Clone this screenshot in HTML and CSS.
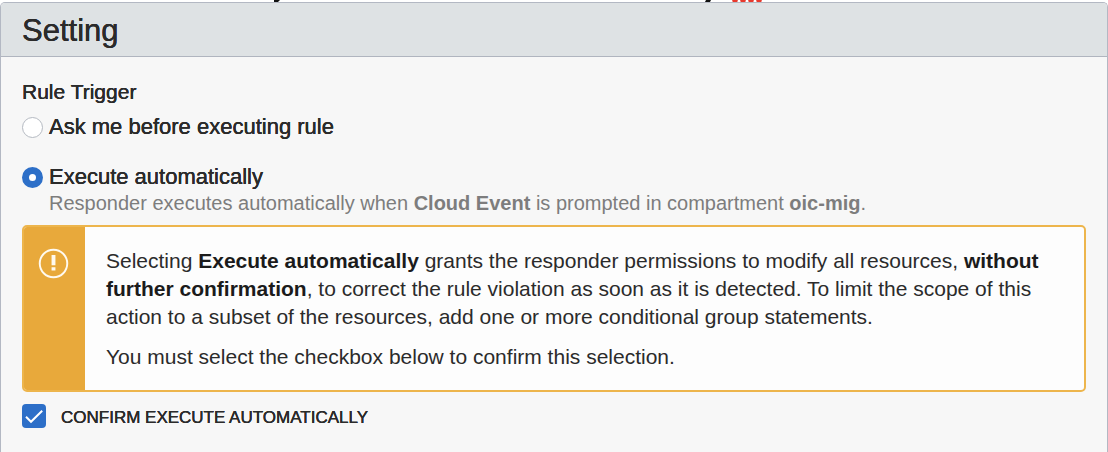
FILE: index.html
```html
<!DOCTYPE html>
<html lang="en">
<head>
<meta charset="utf-8">
<title>Setting</title>
<link rel="stylesheet" href="styles.css">
</head>
<body>
<div class="preceding" aria-hidden="true">
  <svg class="preceding-marks" width="1108" height="2" viewBox="0 0 1108 2">
    <path d="M274 0h6l-2 2h-4zM706 0h5l-1 2h-5z" fill="#111"/>
    <g fill="#e8392d"><circle cx="735" cy="0" r="2.8"/><circle cx="743" cy="0" r="2.8"/><circle cx="751" cy="0" r="2.8"/><circle cx="759" cy="0" r="2.8"/></g>
  </svg>
</div>
<section class="panel">
  <header class="panel-header"><h1 class="panel-title">Setting</h1></header>
  <form class="panel-body">
    <fieldset class="trigger">
      <legend class="trigger-title">Rule Trigger</legend>
      <div class="option">
        <input class="radio" type="radio" name="trigger" id="ask">
        <label class="option-label" for="ask">Ask me before executing rule</label>
      </div>
      <div class="option option-auto">
        <input class="radio" type="radio" name="trigger" id="auto" checked>
        <label class="option-label" for="auto">Execute automatically</label>
      </div>
      <p class="hint">Responder executes automatically when <strong>Cloud Event</strong> is prompted in compartment <strong>oic-mig</strong>.</p>
    </fieldset>
    <div class="notice">
      <div class="notice-side">
        <svg class="notice-icon" width="31" height="31" viewBox="0 0 32 32" fill="none" stroke="#fffaf0" aria-hidden="true">
          <circle cx="16" cy="16" r="14.2" stroke-width="2"/>
          <path d="M16 7.2v10.6M16 19.8v3.4" stroke-width="4"/>
        </svg>
      </div>
      <div class="notice-text">
        <p class="notice-line">Selecting <strong>Execute automatically</strong> grants the responder permissions to modify all resources, <strong>without further confirmation</strong>, to correct the rule violation as soon as it is detected. To limit the scope of this action to a subset of the resources, add one or more conditional group statements.</p>
        <p class="notice-line">You must select the checkbox below to confirm this selection.</p>
      </div>
    </div>
    <div class="confirm">
      <span class="check">
        <input class="check-input" type="checkbox" id="confirm" checked>
        <svg class="check-mark" width="24" height="24" viewBox="0 0 24 24" fill="none" stroke="#fff" stroke-width="2" aria-hidden="true"><path d="M4 12.8l5 5L20.2 6.8"/></svg>
      </span>
      <label class="confirm-label" for="confirm">CONFIRM EXECUTE AUTOMATICALLY</label>
    </div>
  </form>
</section>
</body>
</html>
```
FILE: styles.css
```css
* { box-sizing: border-box; }
body {
  margin: 0;
  min-height: 100vh;
  display: flex;
  flex-direction: column;
  background: #fff;
  color: #2b2b2b;
  font: 21px/28px "Liberation Sans", Arial, sans-serif;
}
.preceding { height: 2px; overflow: hidden; }
.preceding-marks { display: block; }
.panel {
  flex: 1;
  border: 1px solid #b3b8c3;
  border-bottom: 0;
  border-radius: 5px 5px 0 0;
  background: #f7f7f7;
  overflow: hidden;
}
.panel-header {
  padding: 12px 21px 9px;
  background: #dee2e4;
  border-bottom: 1px solid #b0b5bf;
}
.panel-title {
  margin: 0;
  font-size: 31px;
  font-weight: 400;
  line-height: 32px;
}
.panel-title,
.trigger-title,
.option-label,
.confirm-label { text-shadow: 0 0 currentColor, 0 0 currentColor; }
.panel-body { padding: 21px; }
.trigger { margin: 0; padding: 0; border: 0; min-width: 0; }
.trigger-title { padding: 0; }
.option { display: flex; align-items: center; gap: 6px; margin-top: 7px; }
.option-auto { margin-top: 22px; }
.option-label { font-size: 22px; }
.radio {
  appearance: none;
  flex: none;
  width: 21px;
  height: 21px;
  margin: 0;
  border: 1px solid #b5bac2;
  border-radius: 50%;
  background: #fff;
}
.radio:checked { border: 7px solid #2d6fc8; }
.hint { margin: 0 0 0 27px; font-size: 20px; line-height: 24px; color: #7d7d7d; }
.notice {
  display: flex;
  margin-top: 10px;
  border: 2px solid #edb54c;
  border-radius: 5px;
  background: #fdfdfd;
  overflow: hidden;
}
.notice-side { flex: none; width: 61px; padding: 21px 0 0 14px; background: #e8a93b; }
.notice-icon { display: block; }
.notice-text { flex: 1; padding: 20px 32px 19px 21px; }
.notice-line { margin: 0; }
.notice-line + .notice-line { margin-top: 12px; }
strong { font-weight: 700; }
.notice strong { color: #1b1b1b; }
.confirm { display: flex; align-items: flex-start; gap: 15px; margin-top: 12px; }
.check { display: grid; flex: none; }
.check-input {
  grid-area: 1 / 1;
  appearance: none;
  width: 24px;
  height: 24px;
  margin: 0;
  border-radius: 4px;
  background: #2d6fc8;
}
.check-mark { grid-area: 1 / 1; pointer-events: none; visibility: hidden; }
.check-input:checked + .check-mark { visibility: visible; }
.confirm-label { font-size: 17px; line-height: 28px; }
```
